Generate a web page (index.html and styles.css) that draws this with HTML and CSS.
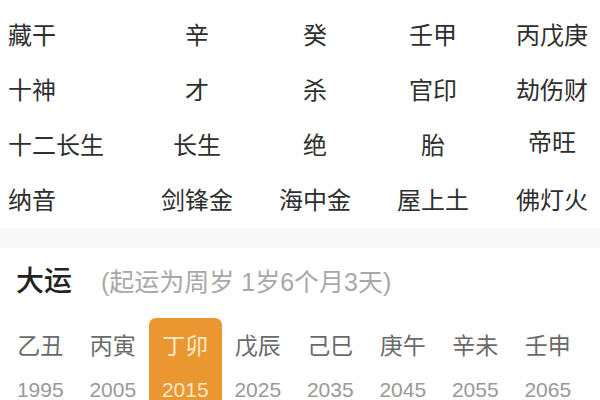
FILE: index.html
```html
<!DOCTYPE html>
<html lang="zh-CN">
<head>
<meta charset="utf-8">
<title>八字</title>
<link rel="stylesheet" href="styles.css">
</head>
<body>
<div class="page">
  <section class="pillars">
    <div class="row">
      <div class="label">藏干</div>
      <div class="cell">辛</div>
      <div class="cell">癸</div>
      <div class="cell">壬甲</div>
      <div class="cell">丙戊庚</div>
    </div>
    <div class="row">
      <div class="label">十神</div>
      <div class="cell">才</div>
      <div class="cell">杀</div>
      <div class="cell">官印</div>
      <div class="cell">劫伤财</div>
    </div>
    <div class="row">
      <div class="label">十二长生</div>
      <div class="cell">长生</div>
      <div class="cell">绝</div>
      <div class="cell">胎</div>
      <div class="cell raised">帝旺</div>
    </div>
    <div class="row">
      <div class="label">纳音</div>
      <div class="cell">剑锋金</div>
      <div class="cell">海中金</div>
      <div class="cell">屋上土</div>
      <div class="cell">佛灯火</div>
    </div>
  </section>
  <div class="divider"></div>
  <section class="dayun">
    <div class="dayun-head">
      <h2 class="dayun-title">大运</h2>
      <span class="dayun-note">(起运为周岁 1岁6个月3天)</span>
    </div>
    <div class="dayun-list">
      <div class="luck"><div class="gz">乙丑</div><div class="year">1995</div></div>
      <div class="luck"><div class="gz">丙寅</div><div class="year">2005</div></div>
      <div class="luck active"><div class="gz">丁卯</div><div class="year">2015</div></div>
      <div class="luck"><div class="gz">戊辰</div><div class="year">2025</div></div>
      <div class="luck"><div class="gz">己巳</div><div class="year">2035</div></div>
      <div class="luck"><div class="gz">庚午</div><div class="year">2045</div></div>
      <div class="luck"><div class="gz">辛未</div><div class="year">2055</div></div>
      <div class="luck"><div class="gz">壬申</div><div class="year">2065</div></div>
    </div>
  </section>
</div>
</body>
</html>
```

FILE: styles.css
```css
html, body {
  margin: 0;
  padding: 0;
  width: 600px;
  height: 400px;
  overflow: hidden;
  background: #ffffff;
}

.page {
  width: 600px;
  height: 400px;
  overflow: hidden;
  font-family: "Noto Sans CJK SC", "Noto Sans", sans-serif;
}

.pillars {
  padding: 6px 0 0 8px;
  display: flex;
  flex-direction: column;
}

.row {
  display: grid;
  grid-template-columns: 130px 118px 118px 118px 120px;
  height: 55px;
  font-size: 24px;
  line-height: 55px;
  color: #2e2e2e;
}

.label {
  text-align: left;
  white-space: nowrap;
}

.cell {
  text-align: center;
  white-space: nowrap;
}

.cell.raised {
  line-height: 49px;
  align-self: start;
}

.divider {
  height: 20px;
  margin-top: 2px;
  background: #f8f8fa;
}

.dayun {
  padding: 11px 0 0 0;
}

.dayun-head {
  display: flex;
  align-items: baseline;
  padding-left: 16px;
  height: 40px;
}

.dayun-title {
  margin: 0;
  font-size: 28px;
  font-weight: 500;
  line-height: 40px;
  color: #222222;
}

.dayun-note {
  margin-left: 29px;
  font-family: "Liberation Sans", "Noto Sans CJK SC", sans-serif;
  font-size: 25px;
  line-height: 40px;
  color: #a8a8a8;
  white-space: nowrap;
}

.dayun-list {
  display: grid;
  grid-template-columns: repeat(8, 72.5px);
  margin-top: 19px;
  padding-left: 4px;
}

.luck {
  display: flex;
  flex-direction: column;
  align-items: center;
  padding-top: 6px;
  height: 92px;
  box-sizing: border-box;
  border-radius: 7px 7px 0 0;
}

.gz {
  font-size: 23px;
  line-height: 40px;
  color: #6a6a6a;
  margin-bottom: 14px;
  white-space: nowrap;
}

.year {
  font-family: "Liberation Sans", "Noto Sans", sans-serif;
  font-size: 21px;
  line-height: 24px;
  color: #999999;
}

.luck.active {
  background: #ea9731;
}

.luck.active .gz,
.luck.active .year {
  color: #fde9c8;
}
```
